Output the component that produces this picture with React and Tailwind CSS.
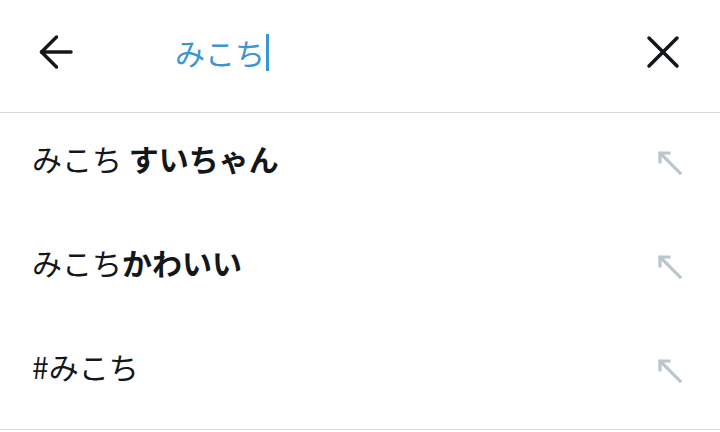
import React from 'react';

const suggestions = [
  { plain: 'みこち ', bold: 'すいちゃん' },
  { plain: 'みこち', bold: 'かわいい' },
  { plain: '#みこち', bold: '' },
];

function UpLeftArrow() {
  return (
    <svg width="28" height="28" viewBox="0 0 28 28" fill="none" stroke="#b9c6cd" strokeWidth="3.2" strokeLinecap="square">
      <path d="M4 13V4h9" />
      <path d="M4.5 4.5 24 24" />
    </svg>
  );
}

export default function App() {
  return (
    <div className="w-[720px] h-[432px] bg-white overflow-hidden" style={{ fontFamily: '"Noto Sans CJK JP", "Noto Sans", sans-serif' }}>
      <div className="h-[113px] flex items-center border-b border-[#d6dadb] pl-[38px] pr-[40px] pb-[8px]">
        <svg width="36" height="36" viewBox="0 0 36 36" fill="none" stroke="#14171a" strokeWidth="3.5" strokeLinecap="round" strokeLinejoin="round">
          <path d="M3.5 18H33" />
          <path d="M18.5 3 3.5 18l15 15" />
        </svg>
        <div className="ml-[101px] flex items-center flex-1">
          <span className="text-[30px] text-[#3a95d3] leading-none">みこち</span>
          <span className="w-[3px] h-[37px] bg-[#3a95d3] ml-[1px]" />
        </div>
        <svg width="34" height="34" viewBox="0 0 34 34" fill="none" stroke="#14171a" strokeWidth="3.5" strokeLinecap="round">
          <path d="M3 3l28 28" />
          <path d="M31 3 3 31" />
        </svg>
      </div>
      <div className="border-b border-[#d6dadb]">
        {suggestions.map((s, i) => (
          <div key={i} className="h-[104px] flex items-center justify-between pl-[32px] pr-[36px] pb-[14px]">
            <div className="text-[30px] text-[#14171a] leading-none whitespace-pre">
              {s.plain}
              {s.bold && <span className="font-bold">{s.bold}</span>}
            </div>
            <div className="mt-[9px]">
              <UpLeftArrow />
            </div>
          </div>
        ))}
        <div className="h-[4px]" />
      </div>
    </div>
  );
}
